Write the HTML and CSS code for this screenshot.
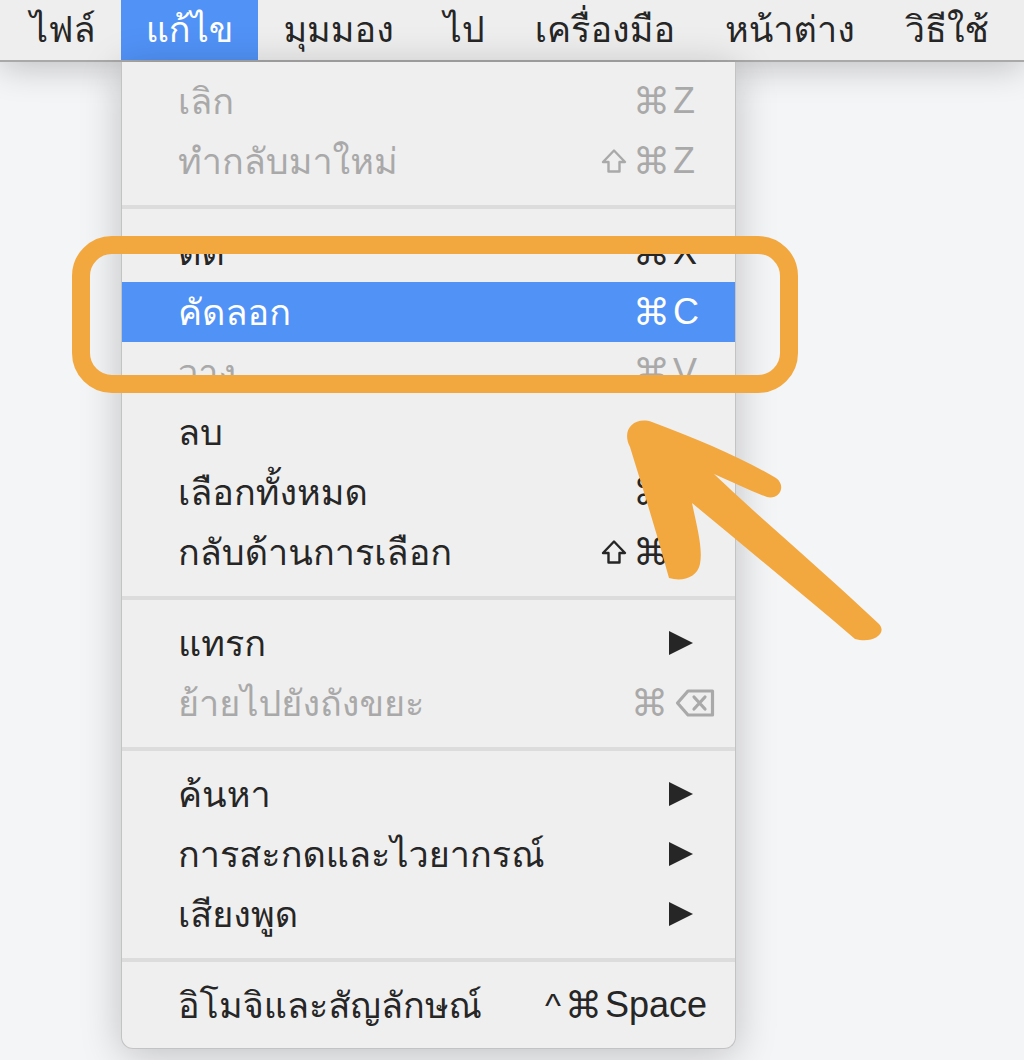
FILE: index.html
```html
<!DOCTYPE html>
<html lang="th">
<head>
<meta charset="utf-8">
<title>แก้ไข</title>
<link rel="stylesheet" href="styles.css">
</head>
<body>
<div class="menubar">
  <span class="mb-item">ไฟล์</span>
  <span class="mb-item active">แก้ไข</span>
  <span class="mb-item">มุมมอง</span>
  <span class="mb-item">ไป</span>
  <span class="mb-item">เครื่องมือ</span>
  <span class="mb-item">หน้าต่าง</span>
  <span class="mb-item">วิธีใช้</span>
</div>
<main class="desk">
  <div class="menu">
    <div class="section first">
      <div class="item disabled"><span class="label">เลิก</span><span class="sc"><span class="mod">⌘</span><span class="key">Z</span></span></div>
      <div class="item disabled"><span class="label">ทำกลับมาใหม่</span><span class="sc"><svg class="shift" width="26" height="26" viewBox="0 0 26 26"><path d="M13 2.5 L24 14 H18.5 V23.5 H7.5 V14 H2 Z"/></svg><span class="mod">⌘</span><span class="key">Z</span></span></div>
    </div>
    <div class="sep"></div>
    <div class="section">
      <div class="item"><span class="label">ตัด</span><span class="sc"><span class="mod">⌘</span><span class="key">X</span></span></div>
      <div class="item selected"><span class="label">คัดลอก</span><span class="sc"><span class="mod">⌘</span><span class="key">C</span></span></div>
      <div class="item disabled"><span class="label">วาง</span><span class="sc"><span class="mod">⌘</span><span class="key">V</span></span></div>
      <div class="item"><span class="label">ลบ</span></div>
      <div class="item"><span class="label">เลือกทั้งหมด</span><span class="sc"><span class="mod">⌘</span><span class="key">A</span></span></div>
      <div class="item"><span class="label">กลับด้านการเลือก</span><span class="sc"><svg class="shift" width="26" height="26" viewBox="0 0 26 26"><path d="M13 2.5 L24 14 H18.5 V23.5 H7.5 V14 H2 Z"/></svg><span class="mod">⌘</span><span class="key">I</span></span></div>
    </div>
    <div class="sep"></div>
    <div class="section">
      <div class="item"><span class="label">แทรก</span><span class="submenu"></span></div>
      <div class="item disabled"><span class="label">ย้ายไปยังถังขยะ</span><span class="sc"><span class="mod">⌘</span><svg class="del" width="40" height="28" viewBox="0 0 40 28"><path d="M13 2 H37.5 V26 H13 L2.5 14 Z M19 8 L30 20 M30 8 L19 20"/></svg></span></div>
    </div>
    <div class="sep"></div>
    <div class="section">
      <div class="item"><span class="label">ค้นหา</span><span class="submenu"></span></div>
      <div class="item"><span class="label">การสะกดและไวยากรณ์</span><span class="submenu"></span></div>
      <div class="item"><span class="label">เสียงพูด</span><span class="submenu"></span></div>
    </div>
    <div class="sep"></div>
    <div class="section last">
      <div class="item"><span class="label">อิโมจิและสัญลักษณ์</span><span class="sc"><span class="mod caret">^</span><span class="mod">⌘</span><span class="key">Space</span></span></div>
    </div>
  </div>
</main>
<div class="callout"></div>
<svg class="arrow" width="1024" height="1060" viewBox="0 0 1024 1060" aria-hidden="true">
  <path fill="#f2a83e" d="M630 447 C621 430 634 416 652 422 C700 440 742 458 776 478 C787 486 779 500 767 497 C748 490 730 481 714 474 C762 520 822 570 879 624 C888 634 872 644 855 639 C800 592 746 548 692 503 C697 527 703 548 700 564 C697 578 682 582 669 578 C659 541 644 492 630 447 Z"/>
</svg>
</body>
</html>
```
FILE: styles.css
```css
html, body {
  margin: 0;
  padding: 0;
}
body {
  width: 1024px;
  height: 1060px;
  overflow: hidden;
  background: #f4f5f7;
  font-family: "Thonburi", "Loma", "Waree", "Noto Sans Thai", "Garuda", "Noto Sans", sans-serif;
  color: #262626;
  position: relative;
}
.menubar {
  position: relative;
  z-index: 2;
  display: flex;
  height: 60px;
  padding-left: 5px;
  background: #eeeeee;
  border-bottom: 2px solid #a9a9a9;
  box-shadow: 0 4px 36px rgba(0, 0, 0, 0.24);
}
.mb-item {
  display: flex;
  align-items: center;
  padding: 0 25px;
  font-size: 36px;
  line-height: 1;
  color: #262626;
}
.mb-item.active {
  background: #5192f7;
  color: #ffffff;
}
.desk {
  position: relative;
  z-index: 3;
  padding-left: 121px;
}
.menu {
  width: 613px;
  background: #efefef;
  border: 1px solid #c3c3c3;
  border-top: none;
  border-radius: 0 0 12px 12px;
  box-shadow: 0 6px 40px rgba(0, 0, 0, 0.22);
  padding: 9px 0 13px;
}
.item {
  display: flex;
  align-items: center;
  justify-content: space-between;
  height: 60px;
  padding: 0 28px 0 56px;
  font-size: 36px;
  color: #262626;
}
.item.disabled {
  color: #a9a9a9;
}
.item.selected {
  background: #5192f7;
  color: #ffffff;
}
.label {
  white-space: nowrap;
}
.sc {
  display: flex;
  align-items: center;
  font-family: "Liberation Sans", "DejaVu Sans", sans-serif;
  font-size: 36px;
  line-height: 1;
}
.mod {
  font-family: "DejaVu Sans", sans-serif;
  font-size: 37px;
  margin-right: 3px;
}
.mod.caret {
  font-family: "Liberation Sans", sans-serif;
  font-size: 34px;
  margin-right: 4px;
}
.key {
  min-width: 34px;
}
.shift {
  margin-right: 6px;
  fill: none;
  stroke: currentColor;
  stroke-width: 2.4;
  stroke-linejoin: round;
}
.del {
  margin-left: 4px;
  margin-right: -8px;
  fill: none;
  stroke: currentColor;
  stroke-width: 3.2;
  stroke-linejoin: round;
  stroke-linecap: round;
}
.submenu {
  width: 0;
  height: 0;
  margin-right: 14px;
  border-left: 24px solid #262626;
  border-top: 12px solid transparent;
  border-bottom: 12px solid transparent;
}
.sep {
  height: 4px;
  margin: 14px 0 13px;
  background: #dcdcdc;
}
.callout {
  position: absolute;
  z-index: 4;
  left: 72px;
  top: 236px;
  width: 690px;
  height: 121px;
  border: 18px solid #f2a83e;
  border-radius: 40px;
}
.arrow {
  position: absolute;
  z-index: 5;
  left: 0;
  top: 0;
}
```
